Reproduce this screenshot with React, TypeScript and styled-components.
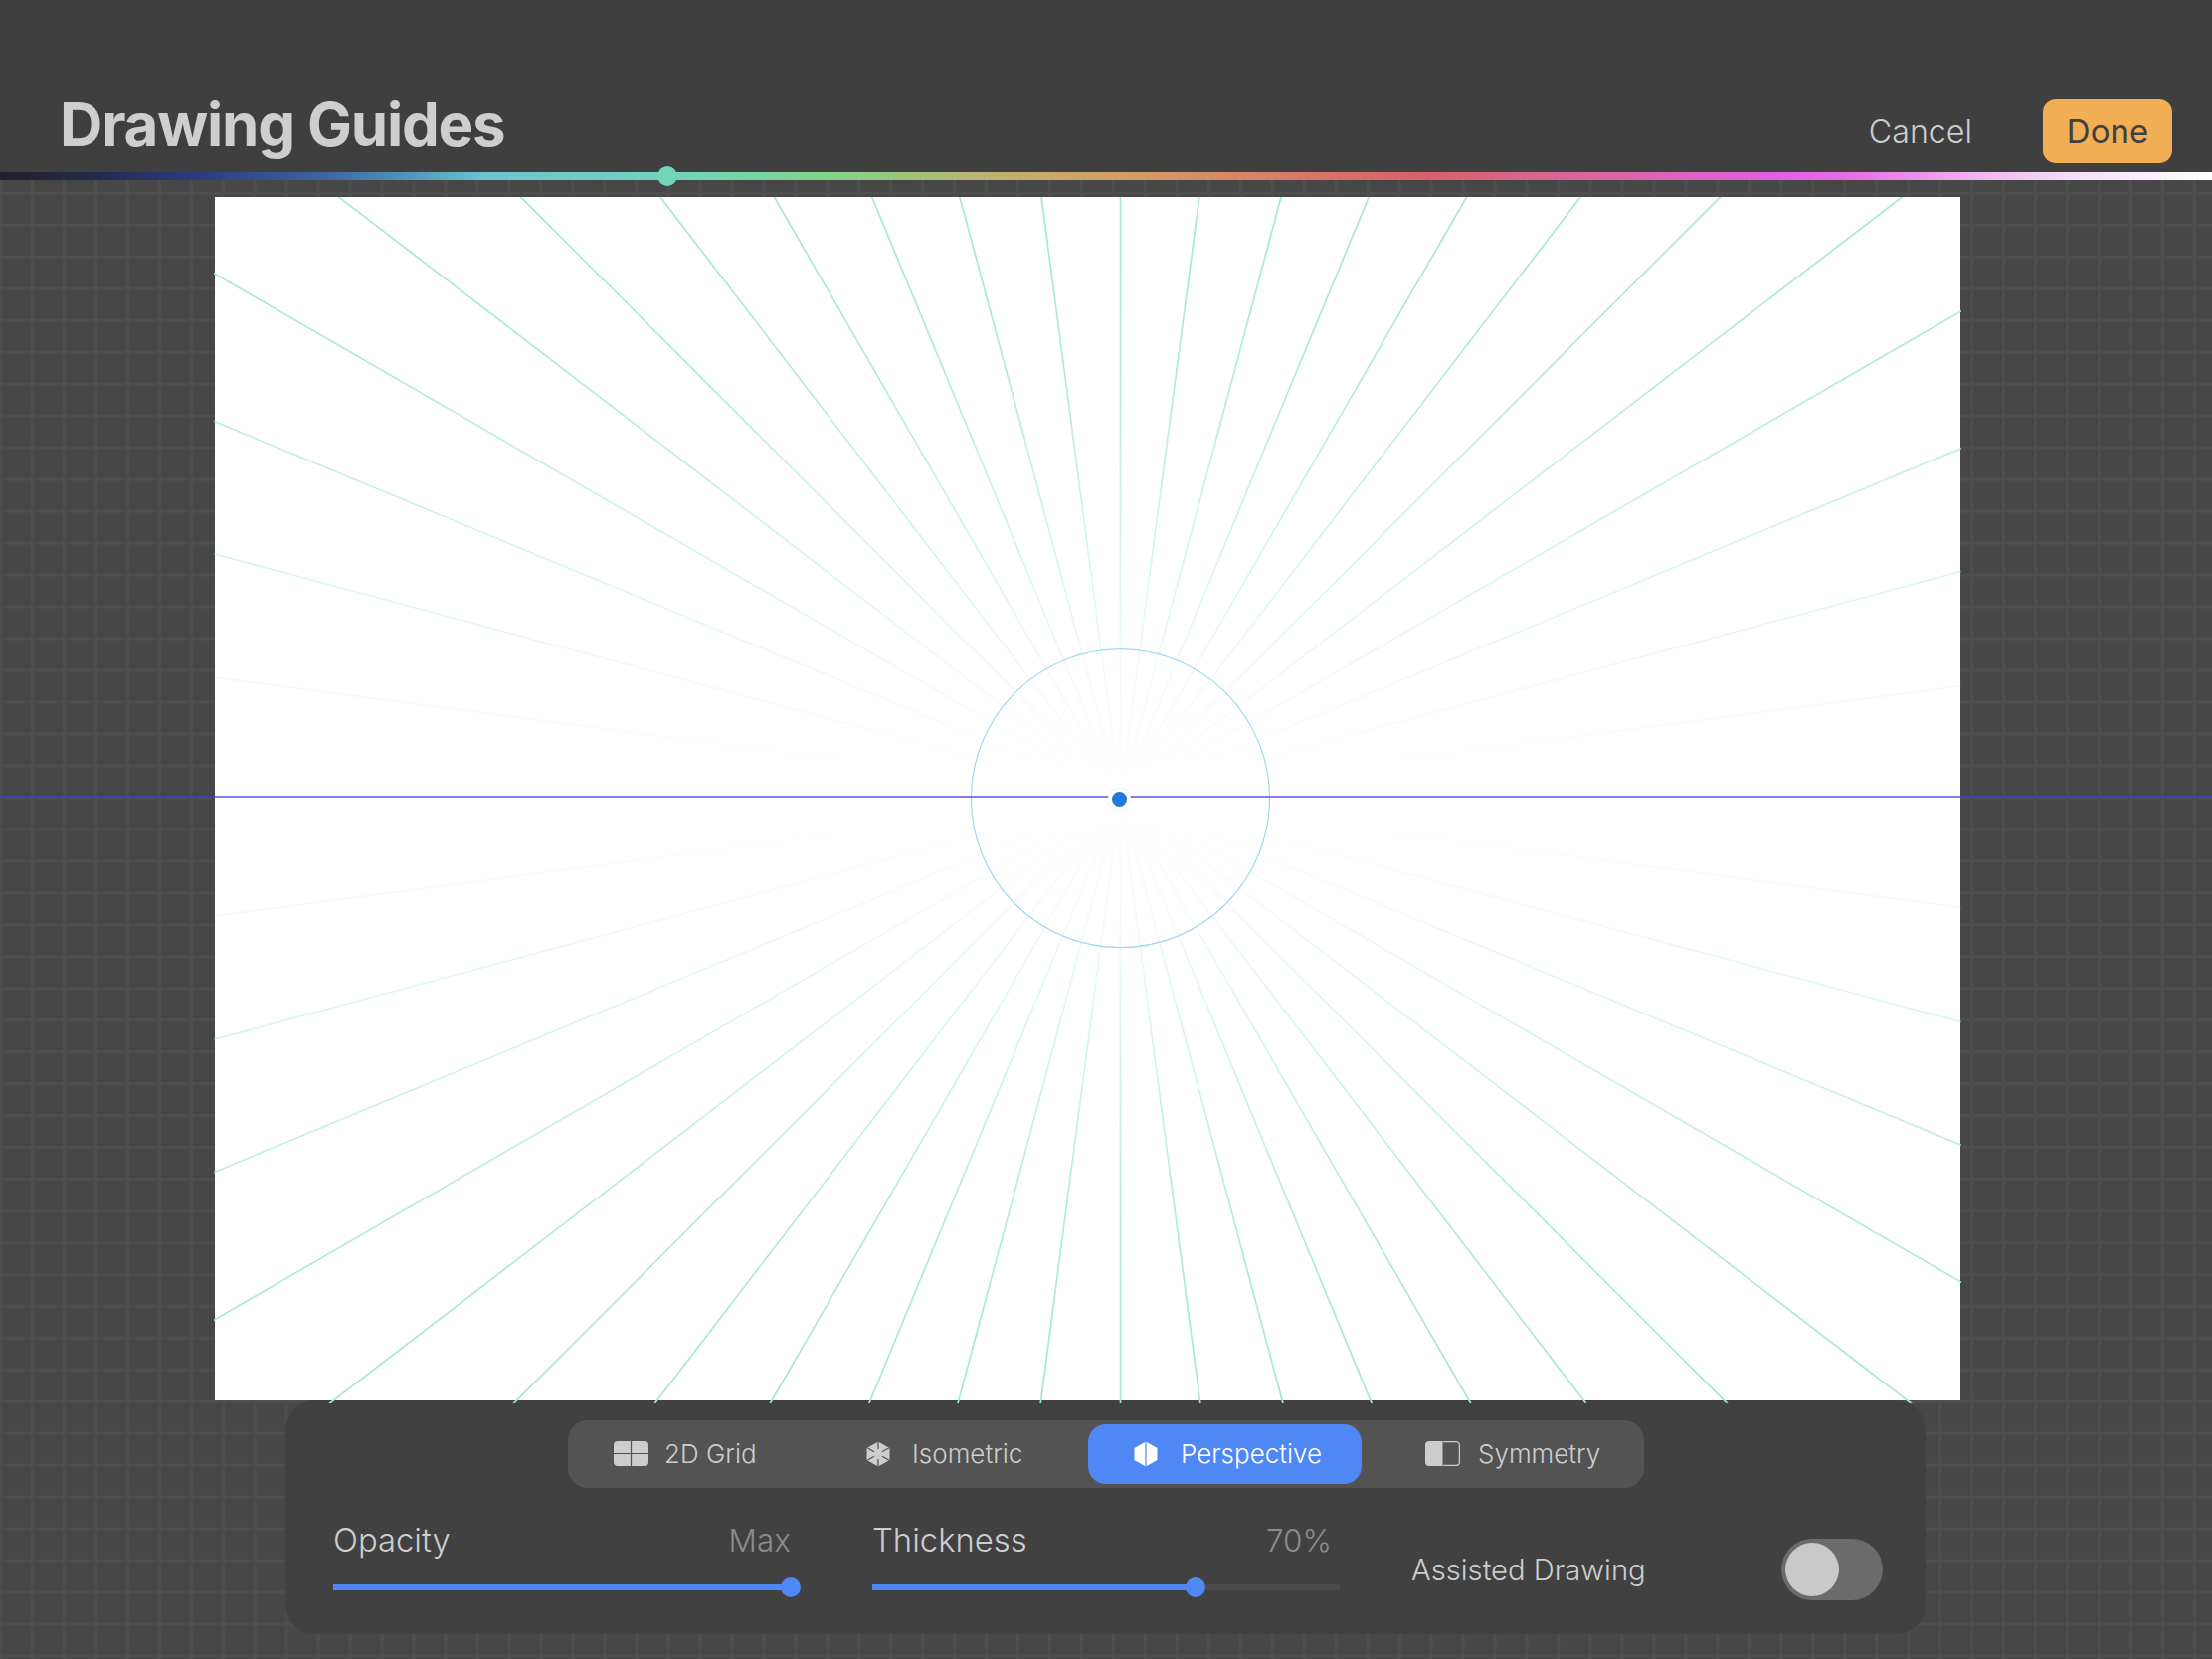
import React from "react";
import styled, { createGlobalStyle } from "styled-components";

const Global = createGlobalStyle`
  html, body {
    margin: 0;
    padding: 0;
    background: #474747;
  }
  * {
    box-sizing: border-box;
  }
`;

const Page = styled.div`
  width: 2224px;
  height: 1668px;
  overflow: hidden;
  display: flex;
  flex-direction: column;
  font-family: Inter, "Liberation Sans", sans-serif;
  color: #cdcdcd;
`;

const Header = styled.header`
  height: 173px;
  flex: none;
  background: #3f3f3f;
  display: flex;
  align-items: flex-start;
  justify-content: space-between;
  padding: 89px 40px 0 60px;
`;

const Title = styled.h1`
  margin: 0;
  font-size: 60px;
  line-height: 72px;
  font-weight: 700;
  letter-spacing: -1.2px;
  color: #cecece;
`;

const HeaderActions = styled.div`
  display: flex;
  align-items: center;
  gap: 71px;
  margin-top: 11px;
`;

const CancelButton = styled.span`
  font-size: 32.2px;
  font-weight: 300;
  color: #cdcdcd;
`;

const DoneButton = styled.span`
  width: 130px;
  height: 64px;
  border-radius: 13px;
  background: #f2ae55;
  color: #404040;
  font-size: 33px;
  font-weight: 400;
  display: flex;
  align-items: center;
  justify-content: center;
`;

const ColorBar = styled.div`
  position: relative;
  z-index: 4;
  height: 8px;
  flex: none;
  background: linear-gradient(
    90deg,
    #20202a 0%,
    #252b4e 4.5%,
    #2a3d80 9%,
    #3f62a0 14.5%,
    #4d90b8 18%,
    #6cc5d0 22%,
    #72d5b8 31.5%,
    #80d488 37.5%,
    #c0b070 45%,
    #d49a68 51.7%,
    #d87a68 58.5%,
    #d9606a 64.3%,
    #d868a0 72%,
    #e060e0 80%,
    #e870e8 84%,
    #f0b0f0 89%,
    #f5e0f8 94%,
    #ffffff 100%
  );
`;

const ColorThumb = styled.div`
  position: absolute;
  left: 661px;
  top: -6px;
  width: 20px;
  height: 20px;
  border-radius: 50%;
  background: #72d5b8;
`;

const Stage = styled.main`
  position: relative;
  flex: 1;
  padding: 17px 0 0 216px;
  background-color: #474747;
  background-image: linear-gradient(90deg, #4e4e4e 3px, transparent 3px),
    linear-gradient(180deg, #4e4e4e 3px, transparent 3px);
  background-size: 31.97px 31.97px;
  background-position: 31px 12px;
`;

const Canvas = styled.div`
  position: relative;
  z-index: 1;
  width: 1755px;
  height: 1210px;
  background: #ffffff;
`;

const CanvasDrawing = styled.svg`
  position: absolute;
  left: -1px;
  top: 0;
  display: block;
`;

const Horizon = styled.div`
  position: absolute;
  z-index: 2;
  left: 0;
  right: 0;
  top: 619px;
  height: 2px;
  background: rgba(60, 60, 230, 0.65);
`;

const VanishingDot = styled.div`
  position: absolute;
  z-index: 3;
  left: 1114px;
  top: 611px;
  width: 23px;
  height: 23px;
  border-radius: 50%;
  background: #2378e0;
  border: 4px solid #ffffff;
  box-shadow: 0 0 1px rgba(0, 0, 0, 0.25);
`;

const Panel = styled.section`
  width: 1649px;
  height: 235px;
  margin-left: 71px;
  border-radius: 30px;
  background: #414141;
  padding: 20px 0 0 48px;
  display: flex;
  flex-direction: column;
`;

const Segments = styled.div`
  align-self: flex-start;
  margin-left: 236px;
  width: 1082px;
  height: 68px;
  padding: 4px 0 4px 4px;
  border-radius: 20px;
  background: #535353;
  display: grid;
  grid-template-columns: 250px 269px 275px 1fr;
`;

const Segment = styled.div<{ $active?: boolean; $gap: number; $pad: number }>`
  display: flex;
  align-items: center;
  gap: ${(p) => p.$gap}px;
  padding-left: ${(p) => p.$pad}px;
  padding-bottom: 1px;
  border-radius: 18px;
  font-size: 26px;
  font-weight: 300;
  background: ${(p) => (p.$active ? "#4f87f5" : "transparent")};
  color: ${(p) => (p.$active ? "#ffffff" : "#cdcdcd")};
`;

const SegmentIcon = styled.svg`
  flex: none;
  display: block;
`;

const Controls = styled.div`
  display: flex;
  margin-top: 29px;
`;

const SliderGroup = styled.div<{ $width: number; $gap: number }>`
  width: ${(p) => p.$width}px;
  margin-right: ${(p) => p.$gap}px;
`;

const SliderHead = styled.div`
  display: flex;
  justify-content: space-between;
  align-items: baseline;
  height: 46px;
  font-size: 32.8px;
  line-height: 46px;
  font-weight: 300;
`;

const SliderValue = styled.span<{ $inset?: number }>`
  color: #8b8b8b;
  font-size: 31.5px;
  padding-right: ${(p) => p.$inset ?? 0}px;
`;

const Track = styled.div`
  position: relative;
  height: 6px;
  margin-top: 22px;
  background: #4a4a4a;
`;

const TrackFill = styled.div`
  height: 100%;
  background: #4f87f5;
`;

const Thumb = styled.div`
  position: absolute;
  top: -7px;
  width: 20px;
  height: 20px;
  margin-left: -10px;
  border-radius: 50%;
  background: #4f87f5;
`;

const AssistRow = styled.div`
  display: flex;
  align-items: center;
  justify-content: space-between;
  width: 474px;
  height: 62px;
  margin-top: 22px;
  margin-left: -1px;
  font-size: 29.2px;
  font-weight: 300;
`;

const Toggle = styled.div`
  width: 102px;
  height: 62px;
  border-radius: 31px;
  padding: 4px;
  background: #6b6b6b;
`;

const ToggleKnob = styled.div`
  width: 54px;
  height: 54px;
  border-radius: 50%;
  background: #c9c9c9;
`;

// rays every 7.5 degrees out of the vanishing point, the horizontal ones sit under the horizon
const VP = { x: 911.5, y: 603 };
const rayAngles = Array.from({ length: 48 }, (_, i) => (i * 7.5 * Math.PI) / 180);

const Rays = () => (
  <CanvasDrawing width={1757} height={1213} viewBox="0 0 1757 1213" fill="none">
    <defs>
      <linearGradient
        id="rayFade"
        gradientUnits="userSpaceOnUse"
        x1="0"
        y1="0"
        x2="0"
        y2="1206"
      >
        <stop offset="0" stopColor="#a4e6da" />
        <stop offset="0.15" stopColor="#a4e6da" stopOpacity="0.85" />
        <stop offset="0.3" stopColor="#a4e6da" stopOpacity="0.44" />
        <stop offset="0.4" stopColor="#a4e6da" stopOpacity="0.15" />
        <stop offset="0.47" stopColor="#a4e6da" stopOpacity="0.03" />
        <stop offset="0.5" stopColor="#a4e6da" stopOpacity="0" />
        <stop offset="0.53" stopColor="#a4e6da" stopOpacity="0.03" />
        <stop offset="0.6" stopColor="#a4e6da" stopOpacity="0.15" />
        <stop offset="0.7" stopColor="#a4e6da" stopOpacity="0.44" />
        <stop offset="0.85" stopColor="#a4e6da" stopOpacity="0.85" />
        <stop offset="1" stopColor="#a4e6da" />
      </linearGradient>
    </defs>
    {rayAngles.map((a, i) => (
      <line
        key={i}
        x1={VP.x}
        y1={VP.y}
        x2={VP.x + Math.sin(a) * 2000}
        y2={VP.y - Math.cos(a) * 2000}
        stroke="url(#rayFade)"
        strokeWidth={1.7}
      />
    ))}
    <circle cx={VP.x} cy={604.7} r={150} stroke="#9fd9ee" strokeWidth={1.2} />
  </CanvasDrawing>
);

const GridIcon = () => (
  <SegmentIcon width={35} height={25} viewBox="0 0 35 25">
    <rect width="35" height="25" rx="4" fill="#cdcdcd" />
    <path d="M17.5 0v25M0 12.5h35" stroke="#535353" strokeWidth="1.2" />
  </SegmentIcon>
);

const IsoIcon = () => (
  <SegmentIcon width={24} height={26} viewBox="0 0 24 26">
    <path d="M12 0.5 23.5 7v12L12 25.5 0.5 19V7z" fill="#cdcdcd" />
    <path d="M12 0v8M12 18v8M1 6.8l7 4M16 15.2l7 4M1 19.2l7-4M16 10.8l7-4" stroke="#535353" strokeWidth="1.2" />
  </SegmentIcon>
);

const PerspectiveIcon = () => (
  <SegmentIcon width={24} height={26} viewBox="0 0 24 26">
    <path d="M12 0.5 23.5 7v12L12 25.5 0.5 19V7z" fill="#ffffff" />
    <path d="M12 0v26" stroke="#4f87f5" strokeWidth="1.2" />
  </SegmentIcon>
);

const SymmetryIcon = () => (
  <SegmentIcon width={35} height={25} viewBox="0 0 35 25">
    <path d="M4 0h13.5v25H4a4 4 0 0 1-4-4V4a4 4 0 0 1 4-4z" fill="#cdcdcd" />
    <path d="M18 .6h13a3.4 3.4 0 0 1 3.4 3.4v17a3.4 3.4 0 0 1-3.4 3.4H18" fill="none" stroke="#cdcdcd" strokeWidth="1.2" />
  </SegmentIcon>
);

export default function App() {
  return (
    <Page>
      <Global />
      <Header>
        <Title>Drawing Guides</Title>
        <HeaderActions>
          <CancelButton>Cancel</CancelButton>
          <DoneButton>Done</DoneButton>
        </HeaderActions>
      </Header>
      <ColorBar>
        <ColorThumb />
      </ColorBar>
      <Stage>
        <Canvas>
          <Rays />
        </Canvas>
        <Horizon />
        <VanishingDot />
        <Panel>
          <Segments>
            <Segment $gap={16} $pad={42}>
              <GridIcon />
              2D Grid
            </Segment>
            <Segment $gap={22} $pad={46}>
              <IsoIcon />
              Isometric
            </Segment>
            <Segment $active $gap={23} $pad={46}>
              <PerspectiveIcon />
              Perspective
            </Segment>
            <Segment $gap={18} $pad={64}>
              <SymmetryIcon />
              Symmetry
            </Segment>
          </Segments>
          <Controls>
            <SliderGroup $width={460} $gap={82}>
              <SliderHead>
                <span>Opacity</span>
                <SliderValue>Max</SliderValue>
              </SliderHead>
              <Track>
                <TrackFill style={{ width: "100%" }} />
                <Thumb style={{ left: "100%" }} />
              </Track>
            </SliderGroup>
            <SliderGroup $width={470} $gap={73}>
              <SliderHead>
                <span>Thickness</span>
                <SliderValue $inset={8}>70%</SliderValue>
              </SliderHead>
              <Track>
                <TrackFill style={{ width: "69.2%" }} />
                <Thumb style={{ left: "69.2%" }} />
              </Track>
            </SliderGroup>
            <AssistRow>
              <span>Assisted Drawing</span>
              <Toggle>
                <ToggleKnob />
              </Toggle>
            </AssistRow>
          </Controls>
        </Panel>
      </Stage>
    </Page>
  );
}
